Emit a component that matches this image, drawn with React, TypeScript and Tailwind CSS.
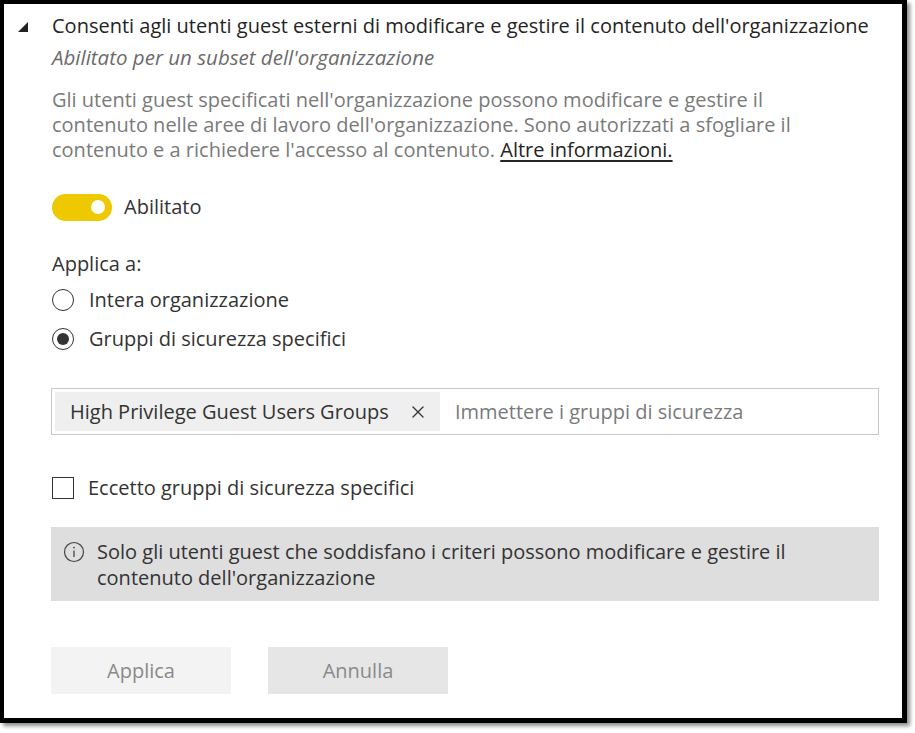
import { X } from 'lucide-react';

const font = { fontFamily: '"Segoe UI", "Open Sans", sans-serif' };

function Radio({ checked, label }: { checked?: boolean; label: string }) {
  return (
    <div className="flex items-center h-[26px]">
      <span className="w-[22px] h-[22px] rounded-full border-[1.5px] border-[#333] flex items-center justify-center">
        {checked && <span className="w-[12px] h-[12px] rounded-full bg-[#333]"></span>}
      </span>
      <span className="ml-[15px] text-[20px] text-[#333]">{label}</span>
    </div>
  );
}

export default function App() {
  return (
    <div className="w-[915px] h-[733px] bg-white" style={font}>
      <div className="w-[907px] h-[723px] bg-white border-black border-l-[4px] border-t-[4px] border-r-[5px] border-b-[5px] shadow-[3px_3px_4px_rgba(0,0,0,0.45)]">
        {/* Header */}
        <div className="flex items-center pt-[9px] pl-[14px]">
          <svg width="10" height="10" viewBox="0 0 10 10" className="mt-[1px]">
            <polygon points="10,0 10,10 0,10" fill="#222" />
          </svg>
          <span className="ml-[24px] text-[20px] leading-[26px] text-[#252423]">
            Consenti agli utenti guest esterni di modificare e gestire il contenuto dell'organizzazione
          </span>
        </div>

        <div className="pl-[48px] pr-[24px]">
          <p className="mt-[5px] text-[20.5px] leading-[26px] italic text-[#6b6b6b]">
            Abilitato per un subset dell'organizzazione
          </p>

          <p className="mt-[17px] text-[20px] leading-[25px] text-[#7a7a7a]">
            Gli utenti guest specificati nell'organizzazione possono modificare e gestire il
            <br />
            contenuto nelle aree di lavoro dell'organizzazione. Sono autorizzati a sfogliare il
            <br />
            contenuto e a richiedere l'accesso al contenuto.{' '}
            <a className="text-[#252423] underline underline-offset-[3px]">Altre informazioni.</a>
          </p>

          {/* Toggle */}
          <div className="mt-[30px] flex items-center">
            <span className="w-[60px] h-[27px] rounded-full bg-[#eec900] flex items-center justify-end pr-[7px]">
              <span className="w-[14px] h-[14px] rounded-full bg-white"></span>
            </span>
            <span className="ml-[12px] text-[20px] text-[#333]">Abilitato</span>
          </div>

          <p className="mt-[29px] text-[20px] leading-[26px] text-[#333]">Applica a:</p>

          <div className="mt-[10px] flex flex-col gap-[13px]">
            <Radio label="Intera organizzazione" />
            <Radio checked label="Gruppi di sicurezza specifici" />
          </div>

          {/* Security groups input */}
          <div className="mt-[36px] -ml-[1px] w-[828px] h-[47px] border border-[#c8c8c8] flex items-center p-[3px]">
            <div className="h-full w-[385px] bg-[#efefef] flex items-center pl-[15px]">
              <span className="text-[20px] text-[#333]">High Privilege Guest Users Groups</span>
              <X className="ml-[19px] w-[20px] h-[20px] text-[#333]" strokeWidth={1.5} />
            </div>
            <span className="ml-[15px] text-[20px] text-[#7a7a7a]">Immettere i gruppi di sicurezza</span>
          </div>

          {/* Checkbox */}
          <div className="mt-[40px] flex items-center h-[26px]">
            <span className="w-[22px] h-[22px] border-[1.5px] border-[#333] bg-white"></span>
            <span className="ml-[14px] text-[20px] text-[#333]">Eccetto gruppi di sicurezza specifici</span>
          </div>

          {/* Info bar */}
          <div className="mt-[26px] -ml-[1px] w-[828px] h-[74px] bg-[#dedede] flex items-start pl-[12px] pt-[12px]">
            <svg width="22" height="22" viewBox="0 0 22 22" className="mt-[2px] shrink-0">
              <circle cx="11" cy="11" r="9.5" fill="none" stroke="#444" strokeWidth="1.2" />
              <line x1="11" y1="9.5" x2="11" y2="16" stroke="#444" strokeWidth="1.3" />
              <circle cx="11" cy="6.6" r="0.9" fill="#444" />
            </svg>
            <p className="ml-[12px] text-[20px] leading-[26px] text-[#333]">
              Solo gli utenti guest che soddisfano i criteri possono modificare e gestire il
              <br />
              contenuto dell'organizzazione
            </p>
          </div>

          {/* Buttons */}
          <div className="mt-[46px] -ml-[1px] flex gap-[37px]">
            <button className="w-[180px] h-[47px] bg-[#f3f3f3] text-[20px] text-[#8a8a8a]">Applica</button>
            <button className="w-[180px] h-[47px] bg-[#e6e6e6] text-[20px] text-[#8a8a8a]">Annulla</button>
          </div>
        </div>
      </div>
    </div>
  );
}
